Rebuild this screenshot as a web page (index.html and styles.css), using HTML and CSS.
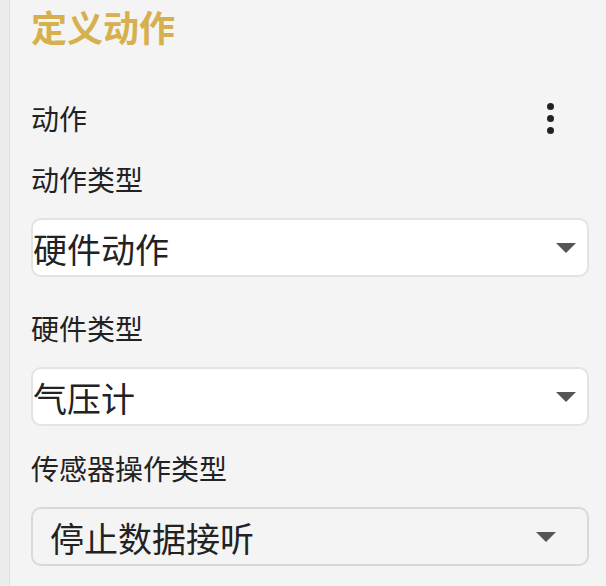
FILE: index.html
```html
<!DOCTYPE html>
<html lang="zh-CN">
<head>
    <meta charset="UTF-8">
    <meta name="viewport" content="width=device-width, initial-scale=1.0">
    <title>定义动作</title>
    <link rel="stylesheet" href="styles.css">
</head>
<body>
    <div class="layout">
        <div class="edge"></div>

        <main class="panel">
            <h1 class="title">定义动作</h1>

            <div class="row action-row">
                <span class="label">动作</span>
                <button class="more" aria-label="更多">
                    <span class="dot"></span>
                    <span class="dot"></span>
                    <span class="dot"></span>
                </button>
            </div>

            <div class="label label-first">动作类型</div>
            <div class="select">
                <span class="value">硬件动作</span>
                <span class="caret"></span>
            </div>

            <div class="label label-second">硬件类型</div>
            <div class="select">
                <span class="value">气压计</span>
                <span class="caret"></span>
            </div>

            <div class="label label-third">传感器操作类型</div>
            <div class="select select-muted">
                <span class="value">停止数据接听</span>
                <span class="caret"></span>
            </div>
        </main>
    </div>
</body>
</html>
```

FILE: styles.css
```css
body {
    margin: 0;
    background-color: #f4f4f4;
    color: #222;
    font-family: "Noto Sans CJK SC", "Noto Sans", sans-serif;
}

.layout {
    display: flex;
    min-height: 586px;
}

.edge {
    width: 9px;
    flex-shrink: 0;
    background-color: #ececec;
    border-right: 1px solid #e2e2e2;
}

.panel {
    flex: 1;
    padding: 0 17px 0 21px;
}

.title {
    margin: 0;
    font-size: 36px;
    line-height: 52px;
    font-weight: bold;
    color: #d5b04c;
}

.row {
    display: flex;
    align-items: center;
    justify-content: space-between;
}

.action-row {
    margin-top: 46px;
    height: 40px;
}

.label {
    font-size: 28px;
    line-height: 40px;
}

.label-first {
    margin-top: 21px;
}

.label-second {
    margin-top: 31px;
}

.label-third {
    margin-top: 22px;
}

.more {
    display: flex;
    flex-direction: column;
    align-items: center;
    gap: 5px;
    padding: 0;
    margin-right: 35px;
    border: none;
    background: none;
}

.dot {
    width: 7px;
    height: 7px;
    border-radius: 50%;
    background-color: #222;
}

.select {
    display: flex;
    align-items: center;
    justify-content: space-between;
    height: 55px;
    margin-top: 19px;
    padding: 0 11px 0 0;
    background-color: #fff;
    border: 2px solid #e3e3e3;
    border-radius: 10px;
}

.value {
    font-size: 34px;
    line-height: 40px;
    padding-top: 3px;
}

.caret {
    width: 0;
    height: 0;
    border-left: 10px solid transparent;
    border-right: 10px solid transparent;
    border-top: 10px solid #555;
}

.select-muted {
    padding: 0 31px 0 17px;
    background-color: #f4f4f4;
    border-color: #d9d9d9;
}
```
